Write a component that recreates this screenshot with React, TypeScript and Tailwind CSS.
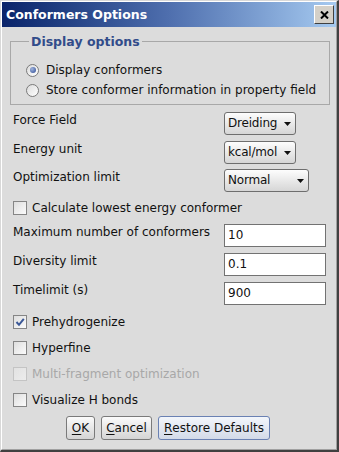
import React from 'react';

const FONT = { fontFamily: '"DejaVu Sans", Verdana, sans-serif' };

function Radio({ checked, label }: { checked?: boolean; label: string }) {
  return (
    <div className="flex h-[20px] items-center gap-[7px]">
      <span className="flex h-[13px] w-[13px] items-center justify-center rounded-full border border-[#7a7a7a] bg-gradient-to-br from-[#dcdcdc] to-[#ffffff]">
        {checked && (
          <span className="h-[6px] w-[6px] rounded-full bg-[radial-gradient(circle_at_35%_35%,#9fb3dc,#2c4a94)]" />
        )}
      </span>
      <span className="text-[12px] leading-[15px] text-[#111]">{label}</span>
    </div>
  );
}

function Check({ checked, disabled, label }: { checked?: boolean; disabled?: boolean; label: string }) {
  return (
    <div className="flex h-[26px] items-center gap-[5px] pl-[11px]">
      <span
        className={`flex h-[14px] w-[14px] items-center justify-center border bg-gradient-to-br ${
          disabled
            ? 'border-[#c4c4c4] from-[#e2e2e2] to-[#ececec]'
            : 'border-[#858585] from-[#dedede] to-[#fbfbfb]'
        }`}
      >
        {checked && (
          <svg width="10" height="10" viewBox="0 0 10 10">
            <path d="M1.5 5 L4 7.8 L8.8 1.8" fill="none" stroke="#3a5796" strokeWidth="2" />
          </svg>
        )}
      </span>
      <span className={`text-[12px] leading-[15px] ${disabled ? 'text-[#a8a8a8]' : 'text-[#111]'}`}>{label}</span>
    </div>
  );
}

function Combo({ value, width }: { value: string; width: string }) {
  return (
    <div
      className={`${width} flex h-[23px] items-center justify-between rounded-[3px] border border-[#6e6e6e] bg-gradient-to-b from-[#fdfdfd] to-[#d6d6d6] pl-[3px] pr-[4px]`}
    >
      <span className="text-[12px] leading-[15px] tracking-[-0.2px] text-[#111]">{value}</span>
      <svg width="7" height="4" viewBox="0 0 7 4">
        <path d="M0 0 H7 L3.5 4 Z" fill="#111" />
      </svg>
    </div>
  );
}

function Field({ value }: { value: string }) {
  return (
    <div className="flex h-[23px] w-[102px] items-center border border-[#727272] bg-white pl-[3px]">
      <span className="text-[12px] leading-[15px] text-[#111]">{value}</span>
    </div>
  );
}

function Btn({ children, width, focused }: { children: React.ReactNode; width: string; focused?: boolean }) {
  return (
    <button
      className={`${width} flex h-[24px] items-center justify-center rounded-[3px] border bg-gradient-to-b text-[12px] leading-[15px] text-[#111] ${
        focused
          ? 'border-[#6a81b3] from-[#f3f6fb] to-[#d3dae8]'
          : 'border-[#7a7a7a] from-[#fbfbfb] to-[#d4d4d4]'
      }`}
    >
      {children}
    </button>
  );
}

function Row({ label, children, mt }: { label: string; children: React.ReactNode; mt: string }) {
  return (
    <div className={`${mt} flex items-start pl-[11px]`}>
      <span className="w-[211px] pt-[1px] text-[12px] leading-[15px] text-[#111]">{label}</span>
      {children}
    </div>
  );
}

export default function App() {
  return (
    <div style={FONT} className="h-[452px] w-[339px] border-b-2 border-l border-r-2 border-t border-[#404040] border-l-[#d8d8d8] border-t-[#d8d8d8] bg-[#dcdcdc]">
      <div className="flex h-full flex-col border-b border-l border-r border-t border-[#a0a0a0] border-l-white border-t-white">
        {/* Title bar */}
        <div className="flex h-[25px] items-center justify-between bg-gradient-to-r from-[#0a246a] via-[#4f6fae] to-[#a6caf0] pl-[4px] pr-[2px]">
          <span className="text-[12.5px] font-bold leading-[16px] text-white">Conformers Options</span>
          <div className="flex h-[19px] w-[20px] items-center justify-center border border-b-[#404040] border-l-white border-r-[#404040] border-t-white bg-[#d4d0c8]">
            <svg width="9" height="8" viewBox="0 0 9 8">
              <path d="M1 0.5 L8 7.5 M8 0.5 L1 7.5" stroke="#000" strokeWidth="2" />
            </svg>
          </div>
        </div>

        {/* Display options */}
        <fieldset className="ml-[8px] mr-[6px] mt-[6px] border border-[#a8a8a8] pb-[4px] pl-[15px] pt-[10px]">
          <legend className="ml-[3px] px-[2px] text-[12.5px] font-bold leading-[17px] text-[#324c8a]">Display options</legend>
          <Radio checked label="Display conformers" />
          <Radio label="Store conformer information in property field" />
        </fieldset>

        <Row label="Force Field" mt="mt-[7px]">
          <Combo value="Dreiding" width="w-[72px]" />
        </Row>
        <Row label="Energy unit" mt="mt-[6px]">
          <Combo value="kcal/mol" width="w-[72px]" />
        </Row>
        <Row label="Optimization limit" mt="mt-[5px]">
          <Combo value="Normal" width="w-[85px]" />
        </Row>

        <div className="mt-[3px]">
          <Check label="Calculate lowest energy conformer" />
        </div>

        <Row label="Maximum number of conformers" mt="mt-[3px]">
          <Field value="10" />
        </Row>
        <Row label="Diversity limit" mt="mt-[6px]">
          <Field value="0.1" />
        </Row>
        <Row label="Timelimit (s)" mt="mt-[6px]">
          <Field value="900" />
        </Row>

        <div className="mt-[4px] flex flex-col">
          <Check checked label="Prehydrogenize" />
          <Check label="Hyperfine" />
          <Check disabled label="Multi-fragment optimization" />
          <Check label="Visualize H bonds" />
        </div>

        <div className="mt-[3px] flex justify-center gap-[6px] pr-[2px]">
          <Btn width="w-[29px]">
            <span className="underline underline-offset-2">O</span>K
          </Btn>
          <Btn width="w-[51px]">
            <span className="underline underline-offset-2">C</span>ancel
          </Btn>
          <Btn width="w-[112px]" focused>
            <span className="underline underline-offset-2">R</span>estore Defaults
          </Btn>
        </div>
      </div>
    </div>
  );
}
